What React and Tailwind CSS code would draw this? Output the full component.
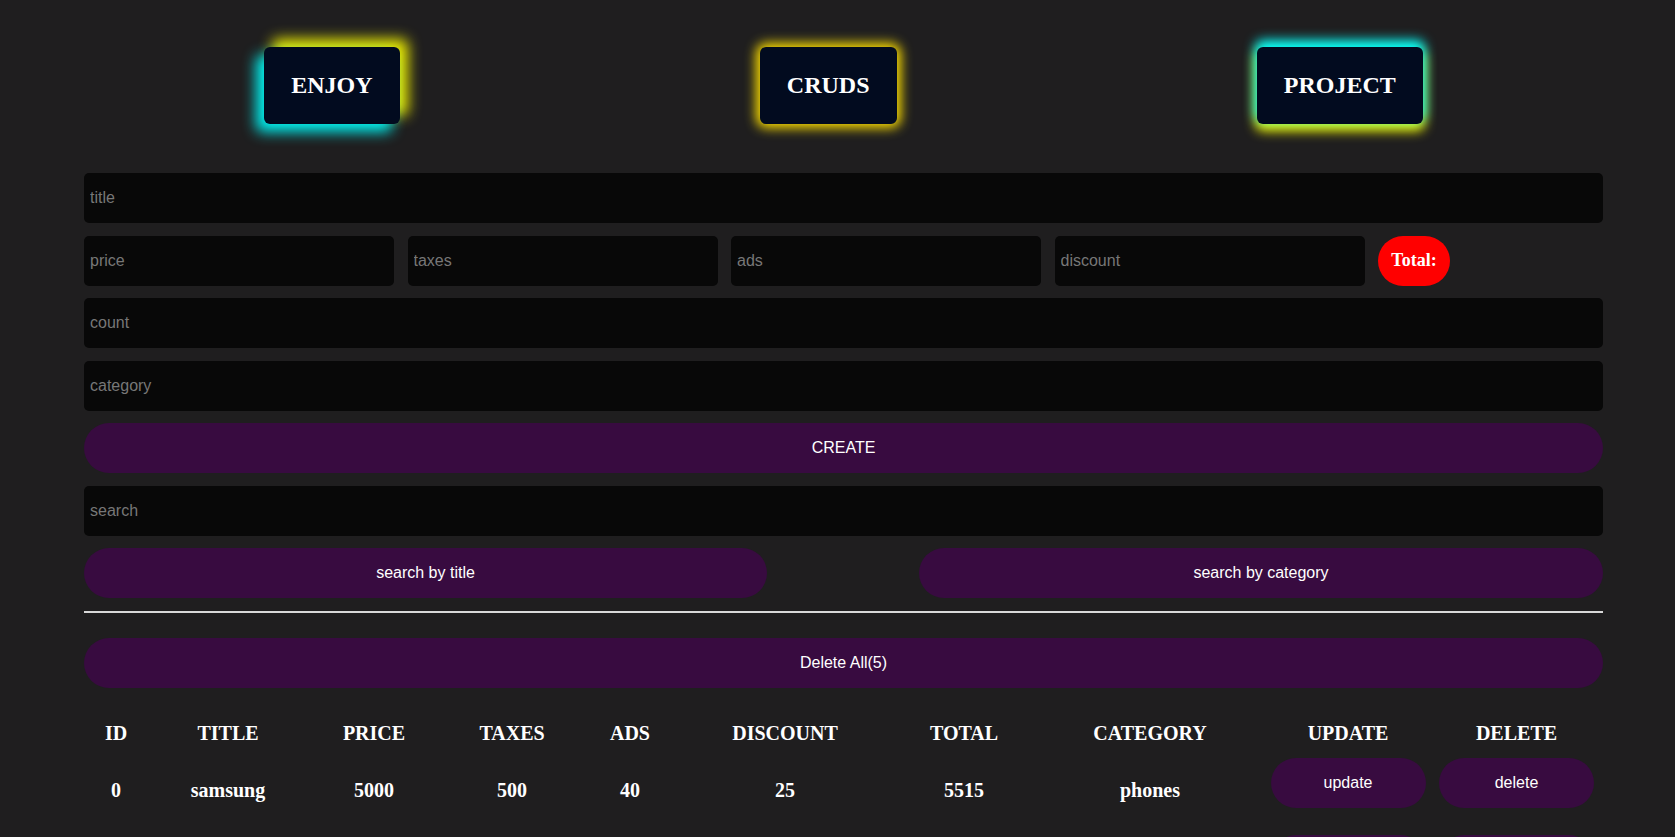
import React from 'react';

const products = [
  { id: 0, title: 'samsung', price: 5000, taxes: 500, ads: 40, discount: 25, total: 5515, category: 'phones' },
  { id: 1, title: 'iphone', price: 7000, taxes: 300, ads: 20, discount: 50, total: 7270, category: 'phones' },
  { id: 2, title: 'dell', price: 9000, taxes: 400, ads: 30, discount: 100, total: 9330, category: 'laptops' },
  { id: 3, title: 'lg', price: 4000, taxes: 200, ads: 10, discount: 20, total: 4190, category: 'tv' },
  { id: 4, title: 'sony', price: 6000, taxes: 250, ads: 15, discount: 30, total: 6235, category: 'tv' },
];

const inputCls =
  'h-[50px] rounded-[5px] bg-[#080808] pl-[6px] text-[16px] text-white outline-none placeholder:text-[#777]';
const purpleBtn =
  'h-[50px] rounded-full bg-[#380b40] text-[16px] text-white';

export default function App() {
  return (
    <div className="min-h-screen bg-[#1f1e1f] font-['Liberation_Sans',Arial,sans-serif]">
      <div className="ml-[84px] w-[1519px] pb-10">
        {/* ── Header boxes ── */}
        <div className="flex justify-around pt-[47px] font-['Liberation_Serif',serif] text-[24px] font-bold text-white">
          <div className="rounded-md bg-[#020b1f] px-[27px] py-[24px] leading-[29px] shadow-[-8px_8px_14px_#00f0f0,8px_-8px_14px_#f0f000]">
            ENJOY
          </div>
          <div className="rounded-md bg-[#020b1f] px-[27px] py-[24px] leading-[29px] shadow-[0_0_12px_4px_#ffe000]">
            CRUDS
          </div>
          <div className="rounded-md bg-[#020b1f] px-[27px] py-[24px] leading-[29px] shadow-[0_-5px_12px_2px_#00ffff,0_5px_12px_2px_#ffff00]">
            PROJECT
          </div>
        </div>

        {/* ── Form ── */}
        <div className="mt-[49px] flex flex-col gap-[12.5px]">
          <input className={inputCls} placeholder="title" />
          <div className="flex gap-[13.5px]">
            <input className={`${inputCls} w-[310px]`} placeholder="price" />
            <input className={`${inputCls} w-[310px]`} placeholder="taxes" />
            <input className={`${inputCls} w-[310px]`} placeholder="ads" />
            <input className={`${inputCls} w-[310px]`} placeholder="discount" />
            <div className="flex h-[50px] w-[72px] items-center justify-center rounded-full bg-[#ff0000] font-['Liberation_Serif',serif] text-[18px] font-bold text-white">
              Total:
            </div>
          </div>
          <input className={inputCls} placeholder="count" />
          <input className={inputCls} placeholder="category" />
          <button className={purpleBtn}>CREATE</button>
          <input className={inputCls} placeholder="search" />
          <div className="flex justify-between">
            <button className={`${purpleBtn} w-[683px]`}>search by title</button>
            <button className={`${purpleBtn} w-[684px]`}>search by category</button>
          </div>
        </div>

        <div className="mt-[13px] border-t-2 border-[#d8d8d8]" />

        <button className={`${purpleBtn} mt-[25px] w-full`}>Delete All(5)</button>

        {/* ── Table ── */}
        <table className="mt-[27px] w-full table-fixed border-collapse text-center font-['Liberation_Serif',serif] text-[20px] font-bold text-white">
          <colgroup>
            <col className="w-[64px]" />
            <col className="w-[160px]" />
            <col className="w-[132px]" />
            <col className="w-[144px]" />
            <col className="w-[92px]" />
            <col className="w-[218px]" />
            <col className="w-[140px]" />
            <col className="w-[232px]" />
            <col className="w-[164px]" />
            <col className="w-[173px]" />
          </colgroup>
          <thead>
            <tr className="h-[36px]">
              <th>ID</th>
              <th>TITLE</th>
              <th>PRICE</th>
              <th>TAXES</th>
              <th>ADS</th>
              <th>DISCOUNT</th>
              <th>TOTAL</th>
              <th>CATEGORY</th>
              <th>UPDATE</th>
              <th>DELETE</th>
            </tr>
          </thead>
          <tbody>
            {products.map((p) => (
              <tr key={p.id} className="h-[77px]">
                <td>{p.id}</td>
                <td>{p.title}</td>
                <td>{p.price}</td>
                <td>{p.taxes}</td>
                <td>{p.ads}</td>
                <td>{p.discount}</td>
                <td>{p.total}</td>
                <td>{p.category}</td>
                <td className="pt-[7px] pb-[20px]">
                  <button className="mx-auto block h-[50px] w-[155px] rounded-full bg-[#380b40] font-['Liberation_Sans',Arial,sans-serif] text-[16px] font-normal text-white">
                    update
                  </button>
                </td>
                <td className="pt-[7px] pb-[20px]">
                  <button className="mx-auto block h-[50px] w-[155px] rounded-full bg-[#380b40] font-['Liberation_Sans',Arial,sans-serif] text-[16px] font-normal text-white">
                    delete
                  </button>
                </td>
              </tr>
            ))}
          </tbody>
        </table>
      </div>
    </div>
  );
}
